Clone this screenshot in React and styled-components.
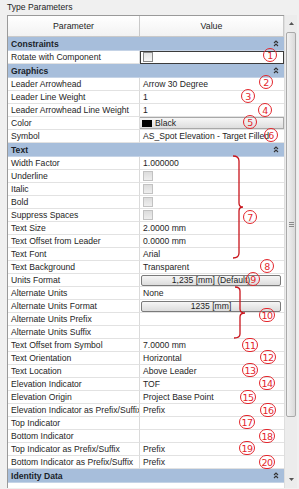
import React from 'react';
import styled, { createGlobalStyle } from 'styled-components';

const GlobalStyle = createGlobalStyle`
  html, body {
    margin: 0;
    padding: 0;
    background: #f0f0f0;
  }
  body {
    font-family: "Liberation Sans", Arial, sans-serif;
  }
`;

// filas de la tabla de parametros
const rows = [
  { group: 'Constraints' },
  { name: 'Rotate with Component', kind: 'check', selected: true },
  { group: 'Graphics' },
  { name: 'Leader Arrowhead', value: 'Arrow 30 Degree' },
  { name: 'Leader Line Weight', value: '1' },
  { name: 'Leader Arrowhead Line Weight', value: '1' },
  { name: 'Color', kind: 'color', value: 'Black' },
  { name: 'Symbol', value: 'AS_Spot Elevation - Target Filled' },
  { group: 'Text' },
  { name: 'Width Factor', value: '1.000000' },
  { name: 'Underline', kind: 'check' },
  { name: 'Italic', kind: 'check' },
  { name: 'Bold', kind: 'check' },
  { name: 'Suppress Spaces', kind: 'check' },
  { name: 'Text Size', value: '2.0000 mm' },
  { name: 'Text Offset from Leader', value: '0.0000 mm' },
  { name: 'Text Font', value: 'Arial' },
  { name: 'Text Background', value: 'Transparent' },
  { name: 'Units Format', kind: 'button', value: '1,235 [mm] (Default)' },
  { name: 'Alternate Units', value: 'None' },
  { name: 'Alternate Units Format', kind: 'button', value: '1235 [mm]' },
  { name: 'Alternate Units Prefix', value: '' },
  { name: 'Alternate Units Suffix', value: '' },
  { name: 'Text Offset from Symbol', value: '7.0000 mm' },
  { name: 'Text Orientation', value: 'Horizontal' },
  { name: 'Text Location', value: 'Above Leader' },
  { name: 'Elevation Indicator', value: 'TOF' },
  { name: 'Elevation Origin', value: 'Project Base Point' },
  { name: 'Elevation Indicator as Prefix/Suffix', value: 'Prefix' },
  { name: 'Top Indicator', value: '' },
  { name: 'Bottom Indicator', value: '' },
  { name: 'Top Indicator as Prefix/Suffix', value: 'Prefix' },
  { name: 'Bottom Indicator as Prefix/Suffix', value: 'Prefix' },
  { group: 'Identity Data' },
];

// numeros rojos encima de la tabla
const marks = [
  [1, 270, 55], [2, 266, 82], [3, 248, 96], [4, 265, 110], [5, 250, 122],
  [6, 271, 135], [7, 250, 217], [8, 267, 266], [9, 253, 279], [10, 267, 315],
  [11, 250, 345], [12, 268, 357], [13, 250, 370], [14, 267, 383], [15, 248, 397],
  [16, 268, 410], [17, 247, 422], [18, 267, 436], [19, 247, 448], [20, 267, 462],
];

const Page = styled.div`
  position: relative;
  width: 299px;
  height: 489px;
  padding: 0 2px 0 7px;
  box-sizing: border-box;
`;

const Title = styled.div`
  height: 15px;
  line-height: 14px;
  font-size: 8.6px;
  color: #1e1e1e;
`;

const Frame = styled.div`
  display: flex;
  height: 473px;
`;

const Table = styled.div`
  flex: 1;
  display: grid;
  grid-template-columns: 132px 1fr;
  grid-auto-rows: min-content;
  align-content: start;
  background: #fff;
  border: 1px solid #9a9a9a;
  border-right: none;
  border-bottom: none;
  box-sizing: border-box;
`;

const HeadCell = styled.div`
  height: 20px;
  display: flex;
  align-items: center;
  justify-content: center;
  font-size: 8.8px;
  color: #1e1e1e;
  background: linear-gradient(#ffffff, #f2f2f2);
  border-bottom: 1px solid #c9c9c9;
  border-right: 1px solid #c9c9c9;
  box-sizing: content-box;
`;

const GroupRow = styled.div`
  grid-column: 1 / 3;
  height: 14px;
  display: flex;
  align-items: center;
  justify-content: space-between;
  padding: 0 5px 0 3px;
  background: #a7bedb;
  border-bottom: 1px solid #c5d3e6;
  box-sizing: border-box;
  font-size: 8.6px;
  font-weight: bold;
  color: #1a1f2a;
`;

const Cell = styled.div`
  height: 13px;
  display: flex;
  align-items: center;
  gap: 3px;
  padding-left: ${p => (p.$flush ? '0' : '3px')};
  box-sizing: border-box;
  border-bottom: 1px solid #e2e2e2;
  border-right: ${p => (p.$name ? '1px solid #dadada' : 'none')};
  font-size: 8.6px;
  color: #1e1e1e;
  white-space: nowrap;
  overflow: hidden;
  outline: ${p => (p.$selected ? '1px solid #3b3b3b' : 'none')};
  outline-offset: -1px;
`;

const Check = styled.span`
  width: 8px;
  height: 8px;
  border: 1px solid ${p => (p.$active ? '#8a8a8a' : '#c2c2c2')};
  background: ${p => (p.$active ? 'linear-gradient(#e4e4e4, #f8f8f8)' : 'linear-gradient(#dcdcdc, #eeeeee)')};
  flex: none;
`;

const ColorButton = styled.div`
  flex: 1;
  height: 12px;
  display: flex;
  align-items: center;
  gap: 3px;
  padding-left: 2px;
  background: linear-gradient(#f7f7f7, #dedede);
  border: 1px solid #a8a8a8;
  border-left: none;
  box-sizing: border-box;
`;

const Swatch = styled.span`
  width: 10px;
  height: 7px;
  background: #000;
`;

const ValueButton = styled.div`
  flex: 1;
  height: 11px;
  margin: 0 3px 0 1px;
  display: flex;
  align-items: center;
  justify-content: center;
  border: 1px solid #7a7a7a;
  border-radius: 2px;
  background: linear-gradient(#f6f6f6, #dcdcdc);
  box-sizing: border-box;
  font-size: 8.6px;
`;

const Scroll = styled.div`
  width: 13px;
  display: flex;
  flex-direction: column;
  background: #ececec;
  border-left: 1px solid #dedede;
  box-sizing: border-box;
`;

const ScrollArrow = styled.div`
  height: 17px;
  display: flex;
  align-items: center;
  justify-content: center;
`;

const Thumb = styled.div`
  height: 383px;
  margin: 0 1px;
  border: 1px solid #a9a9a9;
  border-radius: 2px;
  background: linear-gradient(90deg, #f2f2f2, #dadada);
  display: flex;
  align-items: center;
  justify-content: center;
`;

const Mark = styled.span`
  position: absolute;
  left: ${p => p.$x}px;
  top: ${p => p.$y}px;
  transform: translate(-50%, -50%);
  min-width: 12px;
  height: 12px;
  padding: 0 ${p => (p.$wide ? '1px' : '0')};
  border: 1px solid #e3262c;
  border-radius: 7px;
  display: flex;
  align-items: center;
  justify-content: center;
  font-family: "DejaVu Sans", sans-serif;
  font-size: 9.5px;
  letter-spacing: -0.6px;
  color: #e3262c;
`;

const Overlay = styled.svg`
  position: absolute;
  left: 0;
  top: 0;
  pointer-events: none;
`;

const Chevrons = () => (
  <svg width="6" height="7" viewBox="0 0 6 7">
    <path d="M1 3 L3 1 L5 3 M1 6 L3 4 L5 6" fill="none" stroke="#333" strokeWidth="1.1" />
  </svg>
);

const Arrow = ({ up }) => (
  <svg width="5" height="3" viewBox="0 0 5 3">
    <path d={up ? 'M0 3 L2.5 0 L5 3 Z' : 'M0 0 L2.5 3 L5 0 Z'} fill="#555" />
  </svg>
);

function Value({ row }) {
  if (row.kind === 'check') return <Check $active={row.selected} />;
  if (row.kind === 'color')
    return (
      <ColorButton>
        <Swatch />
        {row.value}
      </ColorButton>
    );
  if (row.kind === 'button') return <ValueButton>{row.value}</ValueButton>;
  return row.value;
}

export default function App() {
  return (
    <>
      <GlobalStyle />
      <Page>
        <Title>Type Parameters</Title>
        <Frame>
          <Table>
            <HeadCell>Parameter</HeadCell>
            <HeadCell>Value</HeadCell>
            {rows.map((row, i) =>
              row.group ? (
                <GroupRow key={i}>
                  {row.group}
                  <Chevrons />
                </GroupRow>
              ) : (
                <React.Fragment key={i}>
                  <Cell $name>{row.name}</Cell>
                  <Cell
                    $selected={row.selected}
                    $flush={row.kind === 'color' || row.kind === 'button'}
                  >
                    <Value row={row} />
                  </Cell>
                </React.Fragment>
              )
            )}
          </Table>
          <Scroll>
            <ScrollArrow>
              <Arrow up />
            </ScrollArrow>
            <Thumb>
              <svg width="5" height="5" viewBox="0 0 5 5">
                <path d="M0 0.5 H5 M0 2.5 H5 M0 4.5 H5" stroke="#8a8a8a" strokeWidth="1" />
              </svg>
            </Thumb>
            <div style={{ flex: 1 }} />
            <ScrollArrow>
              <Arrow />
            </ScrollArrow>
          </Scroll>
        </Frame>

        <Overlay width="299" height="489">
          <path
            d="M233 156 Q239 156 239 161 L239 203 Q239 207 243 207 Q239 207 239 211 L239 253 Q239 258 233 258"
            fill="none"
            stroke="#c8141c"
            strokeWidth="1.3"
          />
          <path
            d="M235 287 Q240 287 240 291 L240 309 Q240 313 245 313 Q240 313 240 317 L240 334 Q240 338 234 338"
            fill="none"
            stroke="#c8141c"
            strokeWidth="1.3"
          />
        </Overlay>
        {marks.map(([n, x, y]) => (
          <Mark key={n} $x={x} $y={y} $wide={n > 9}>
            {n}
          </Mark>
        ))}
      </Page>
    </>
  );
}
